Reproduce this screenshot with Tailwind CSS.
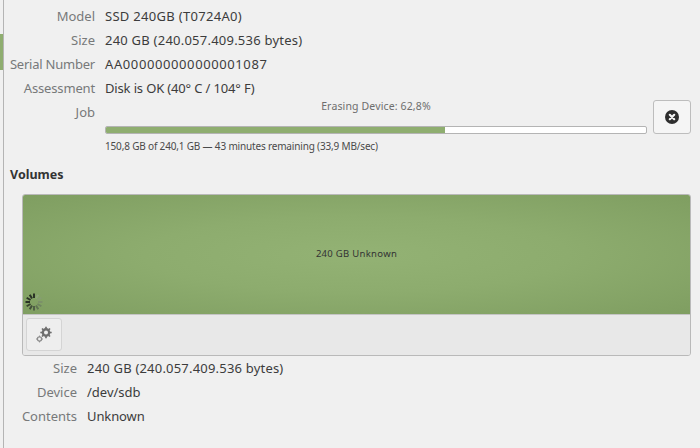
<!DOCTYPE html>
<html><head><meta charset="utf-8"><script src="https://cdn.jsdelivr.net/npm/@tailwindcss/browser@4"></script></head>
<body class="m-0 overflow-hidden">
<div class="flex w-[700px] h-[448px] bg-[#f0f0f0] text-[13px] text-[#3c3c3c] font-['Noto_Sans',sans-serif] overflow-hidden">
  <div class="w-[3px] shrink-0 pt-[34px]"><div class="h-[36px] bg-[#8fae70]"></div></div>
  <div class="w-px shrink-0 bg-[#b4b4b4]"></div>
  <div class="flex-1 min-w-0 flex flex-col">
    <div class="grid grid-cols-[91px_1fr] gap-x-[10px] auto-rows-[minmax(24px,auto)] pt-[4px] leading-[24px]">
      <div class="text-right text-[#77797a]">Model</div><div class="tracking-[0.3px]">SSD 240GB (T0724A0)</div>
      <div class="text-right text-[#77797a]">Size</div><div class="tracking-[0.23px]">240 GB (240.057.409.536 bytes)</div>
      <div class="text-right text-[#77797a] tracking-[-0.22px]">Serial Number</div><div class="tracking-[0.6px]">AA000000000000001087</div>
      <div class="text-right text-[#77797a] tracking-[-0.15px]">Assessment</div><div class="tracking-[-0.15px]">Disk is OK (40° C / 104° F)</div>
      <div class="text-right text-[#77797a]">Job</div>
      <div class="flex h-[56px] gap-[6px]">
        <div class="w-[542px] flex flex-col">
          <div class="text-center text-[10.5px] tracking-[0.14px] leading-[14px] text-[#6e6e6e] mt-[-1px]">Erasing Device: 62,8%</div>
          <div class="mt-[13px] h-[8px] bg-white border border-[#b4b4b4] rounded-[2px] overflow-hidden"><div class="h-full w-[62.8%] bg-[#8fae70]"></div></div>
          <div class="text-[10px] tracking-[-0.17px] leading-[14px] mt-[5px] text-[#4a4a4a]">150,8 GB of 240,1 GB — 43 minutes remaining (33,9 MB/sec)</div>
        </div>
        <button class="w-[38px] h-[34px] flex items-center justify-center bg-[#f5f5f5] border border-[#bdbdbd] rounded-[3px]">
          <svg width="14" height="14" viewBox="0 0 14 14"><circle cx="7" cy="7" r="7" fill="#2e2e2e"/><path d="M4.8 4.8l4.4 4.4M9.2 4.8L4.8 9.2" stroke="#f5f5f5" stroke-width="2.2" stroke-linecap="round"/></svg>
        </button>
      </div>
    </div>
    <div class="font-bold text-[12.5px] leading-[16px] text-[#333] pl-[6px] mt-[11px]">Volumes</div>
    <div class="ml-[18px] mr-[9px] mt-[11px] h-[162px] flex flex-col border border-[#b9b9b9] rounded-[3px] overflow-hidden">
      <div class="h-[119px] relative flex items-center justify-center text-[9.5px] tracking-[0.3px] text-[#333] bg-[radial-gradient(ellipse_at_center,#93b274_0%,#8dac6e_45%,#7f9e61_100%)]">
        240 GB Unknown
        <svg class="absolute left-[2px] bottom-[3px]" width="18" height="18" viewBox="0 0 18 18" fill="none" stroke-width="2">
          <path d="M13.25 1.64L11 5.54" stroke="#8ea67a"/><path d="M16.36 4.75L12.46 7" stroke="#869d72"/><path d="M17.5 9H13" stroke="#7c9169"/><path d="M16.36 13.25L12.46 11" stroke="#6f8560"/><path d="M13.25 16.36L11 12.46" stroke="#5f7352"/><path d="M9 17.5V13" stroke="#4f5f45"/><path d="M4.75 16.36L7 12.46" stroke="#414f38"/><path d="M1.64 13.25L5.54 11" stroke="#38442f"/><path d="M.5 9H5" stroke="#2a3326"/><path d="M1.64 4.75L5.54 7" stroke="#2a3326"/><path d="M4.75 1.64L7 5.54" stroke="#2a3326"/><path d="M9 .5V5" stroke="#2a3326"/>
        </svg>
      </div>
      <div class="flex-1 bg-[#e8e8e8] border-t border-[#c4c4c4] pl-[3px] pt-[3px]">
        <button class="w-[36px] h-[33px] flex items-center justify-center bg-[#eeeeee] border border-[#d4d4d4] rounded-[3px]">
          <svg width="18" height="18" viewBox="0 0 18 18" fill="none" stroke="#6e6e6e">
            <circle cx="11" cy="6.5" r="3.2" stroke-width="2.4"/><path d="M11 0.8v2M11 10.2v2M5.3 6.5h2M14.7 6.5h2M7 2.5l1.4 1.4M13.6 9.1L15 10.5M15 2.5l-1.4 1.4M8.4 9.1L7 10.5" stroke-width="1.7"/>
            <circle cx="4.5" cy="13" r="2.1" stroke="#8c8c8c" stroke-width="1.3"/><path d="M4.5 9.6v1.3M4.5 15.1v1.3M1.1 13h1.3M6.6 13h1.3" stroke="#8c8c8c"/>
          </svg>
        </button>
      </div>
    </div>
    <div class="grid grid-cols-[73px_1fr] gap-x-[10px] auto-rows-[24px] leading-[24px]">
      <div class="text-right text-[#77797a]">Size</div><div class="tracking-[0.2px]">240 GB (240.057.409.536 bytes)</div>
      <div class="text-right text-[#77797a]">Device</div><div>/dev/sdb</div>
      <div class="text-right text-[#77797a]">Contents</div><div class="tracking-[-0.1px]">Unknown</div>
    </div>
  </div>
</div>
</body></html>
